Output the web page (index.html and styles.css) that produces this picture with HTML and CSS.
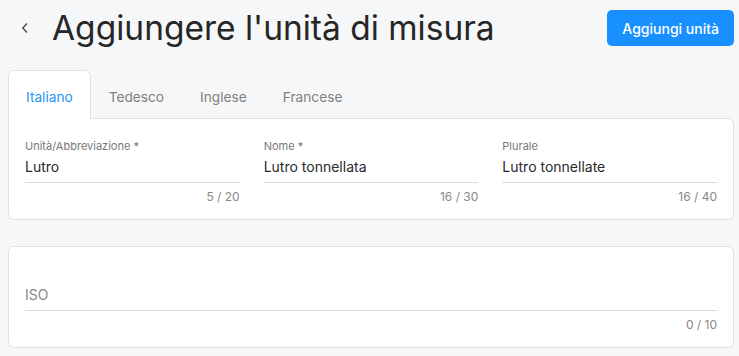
FILE: index.html
```html
<!DOCTYPE html>
<html lang="it">
  <head>
    <meta charset="UTF-8" />
    <title>Aggiungere l'unità di misura</title>
    <link rel="stylesheet" href="styles.css">
  </head>
  <body>
    <div class="page">
      <div class="header">
        <a class="back" href="#">
          <svg width="8" height="12" viewBox="0 0 8 12">
            <polyline points="6,1.5 1.8,6 6,10.5" fill="none" stroke="#555" stroke-width="1.5" />
          </svg>
        </a>
        <h1>Aggiungere l'unità di misura</h1>
        <button class="btn-primary">Aggiungi unità</button>
      </div>

      <div class="tabs">
        <div class="tab active">Italiano</div>
        <div class="tab">Tedesco</div>
        <div class="tab">Inglese</div>
        <div class="tab">Francese</div>
      </div>

      <div class="card card-tabbed">
        <div class="fields">
          <div class="field">
            <div class="label">Unità/Abbreviazione *</div>
            <div class="input">Lutro</div>
            <div class="counter">5 / 20</div>
          </div>
          <div class="field">
            <div class="label">Nome *</div>
            <div class="input">Lutro tonnellata</div>
            <div class="counter">16 / 30</div>
          </div>
          <div class="field">
            <div class="label">Plurale</div>
            <div class="input">Lutro tonnellate</div>
            <div class="counter">16 / 40</div>
          </div>
        </div>
      </div>

      <div class="card">
        <div class="field">
          <div class="label"></div>
          <div class="input placeholder">ISO</div>
          <div class="counter">0 / 10</div>
        </div>
      </div>
    </div>
  </body>
</html>
```

FILE: styles.css
```css
* {
  box-sizing: border-box;
  font-family: Inter, "Noto Sans", sans-serif;
}

body {
  margin: 0;
  background-color: #f6f7f8;
  color: #222;
}

.page {
  padding: 10px 5px 0 8px;
}

.header {
  display: flex;
  align-items: center;
  height: 36px;
}

.back {
  display: flex;
  align-items: center;
  margin-left: 13px;
  width: 31px;
  height: 36px;
}

h1 {
  flex: 1;
  margin: 0;
  font-size: 33.5px;
  font-weight: 400;
  line-height: 36px;
  color: #262626;
}

.btn-primary {
  height: 36px;
  padding: 0 15px;
  background-color: #1890ff;
  color: white;
  border: none;
  border-radius: 5px;
  font-size: 14px;
  font-weight: 500;
  cursor: pointer;
}

.tabs {
  display: flex;
  margin-top: 24px;
}

.tab {
  height: 48px;
  padding: 4px 17px 0;
  display: flex;
  align-items: center;
  font-size: 13.7px;
  color: #808080;
  border: 1px solid transparent;
  border-bottom: none;
}

.tab.active {
  position: relative;
  z-index: 1;
  margin-bottom: -1px;
  height: 49px;
  color: #2196f3;
  background: white;
  border-color: #e0e0e0;
  border-radius: 6px 6px 0 0;
}

.card {
  background: white;
  border: 1px solid #e0e0e0;
  border-radius: 6px;
  padding: 20px 16px 14px;
}

.card + .card {
  margin-top: 26px;
}

.card-tabbed {
  border-top-left-radius: 0;
}

.fields {
  display: grid;
  grid-template-columns: 1fr 1fr 1fr;
  gap: 24px;
}

.label {
  height: 14px;
  font-size: 11px;
  line-height: 14px;
  color: #777;
}

.input {
  margin-top: 4px;
  font-size: 14px;
  line-height: 20px;
  padding-bottom: 5px;
  border-bottom: 1px solid #dcdcdc;
  color: #2a2a2a;
}

.input.placeholder {
  color: #888;
}

.counter {
  margin-top: 6px;
  text-align: right;
  font-size: 12px;
  line-height: 16px;
  color: #888;
}
```
